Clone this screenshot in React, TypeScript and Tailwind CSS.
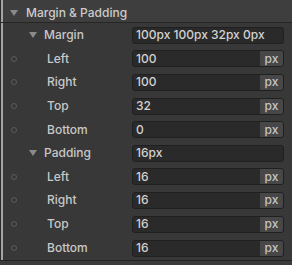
import React from "react";

const Tri = () => (
  <svg width="8" height="6" viewBox="0 0 8 6" className="shrink-0">
    <polygon points="0,0 8,0 4,6" fill="#8a8a8a" />
  </svg>
);

const Dot = () => (
  <div className="w-[6px] h-[6px] rounded-full border border-[#5c5c5c] shrink-0" />
);

function Group({ label, value, tall }: { label: string; value: string; tall: boolean }) {
  return (
    <div className={`flex items-center ${tall ? "h-[24px]" : "h-[23px]"}`}>
      <div className="w-[26px] shrink-0" />
      <Tri />
      <span className="ml-[7px] text-[#c8c8c8]">{label}</span>
      <div className="ml-auto mr-[8px] w-[152px] h-[17px] rounded-[3px] bg-[#2a2a2a] border border-[#202020] flex items-center px-[3px] text-[#d2d2d2]">
        {value}
      </div>
    </div>
  );
}

function Row({ label, value, tall }: { label: string; value: string; tall: boolean }) {
  return (
    <div className={`flex items-center ${tall ? "h-[24px]" : "h-[23px]"}`}>
      <div className="w-[8px] shrink-0" />
      <Dot />
      <span className="ml-[30px] text-[#c8c8c8]">{label}</span>
      <div className="ml-auto mr-[8px] w-[152px] h-[17px] rounded-[3px] bg-[#2a2a2a] border border-[#202020] flex items-stretch text-[#d2d2d2] overflow-hidden">
        <span className="flex-1 flex items-center px-[3px]">{value}</span>
        <span className="w-[23px] bg-[#474747] flex items-center justify-center text-[#c4c4c4]">px</span>
      </div>
    </div>
  );
}

export default function App() {
  return (
    <div
      className="w-[292px] h-[265px] bg-[#3b3b3b] overflow-hidden text-[12px] leading-none font-medium"
      style={{ fontFamily: "Inter, 'Noto Sans', sans-serif" }}
    >
      <div className="border-l border-[#2a2a2a]">
        <div className="border-l-2 border-[#a4a4a4]">
          <div className="h-[22px] bg-[#3e3e3e] flex items-center pl-[7px] pt-[3px]">
            <Tri />
            <span className="ml-[8px] text-[12px] text-[#cccccc]">Margin &amp; Padding</span>
          </div>
        </div>
        <div className="h-[1px] bg-[#262626]" />
        <div className="border-l-2 border-[#a4a4a4] bg-[#383838]">
          <Group label="Margin" value="100px 100px 32px 0px" tall={true} />
          <Row label="Left" value="100" tall={false} />
          <Row label="Right" value="100" tall={true} />
          <Row label="Top" value="32" tall={true} />
          <Row label="Bottom" value="0" tall={false} />
          <Group label="Padding" value="16px" tall={true} />
          <Row label="Left" value="16" tall={false} />
          <Row label="Right" value="16" tall={true} />
          <Row label="Top" value="16" tall={true} />
          <Row label="Bottom" value="16" tall={true} />
        </div>
        <div className="h-[1px] bg-[#222222]" />
      </div>
    </div>
  );
}
